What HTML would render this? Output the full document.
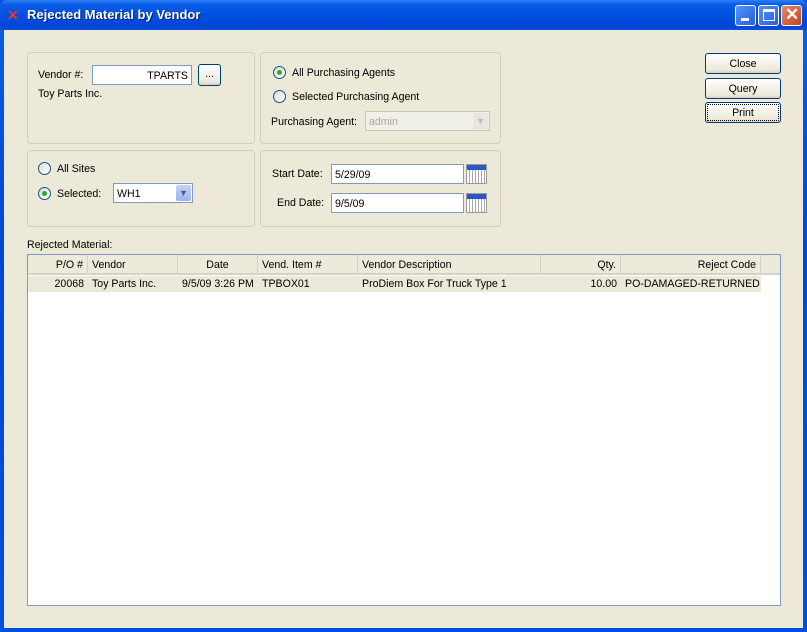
<!DOCTYPE html>
<html><head><style>
*{box-sizing:border-box;margin:0;padding:0}
body{width:807px;height:632px;overflow:hidden;font-family:"Liberation Sans",sans-serif;font-size:10.6px;color:#000;background:#0054e3}
.win{position:absolute;left:0;top:0;width:807px;height:632px;background:linear-gradient(#0a5fe8,#0046d5 40%,#0050e0);border-radius:7px 7px 0 0}
.title{position:absolute;left:0;top:0;width:807px;height:30px;background:linear-gradient(#2b7ff5 0%,#0a5ce6 15%,#0050e0 50%,#0046d8 85%,#0a4fd6 100%);border-radius:7px 7px 0 0}
.title span{position:absolute;left:27px;top:7px;color:#fff;font-weight:bold;font-size:13px;text-shadow:1px 1px #0a1e6e}
.client{position:absolute;left:4px;top:30px;width:799px;height:598px;background:#ece9d8}
.grp{position:absolute;border:1px solid #d0d0bf;border-radius:4px}
.abs{position:absolute}
.inp{position:absolute;background:#fff;border:1px solid #7f9db9;height:20px;padding:4px 3px 0;white-space:nowrap}
.btn{position:absolute;width:76px;height:21px;border:1px solid #003c74;border-radius:3px;background:linear-gradient(#fff,#ece9d8 85%,#d6d0c5);text-align:center;line-height:20px}
.radio{position:absolute;width:13px;height:13px;border-radius:50%;border:1px solid #1c5180;background:linear-gradient(135deg,#dcdcd6,#fff)}
.radio.on::after{content:"";position:absolute;left:3px;top:3px;width:5px;height:5px;border-radius:50%;background:#2fa82f}
.cal{position:absolute;width:21px;height:20px;border:1px solid #999;background:repeating-linear-gradient(90deg,#fff 0 2px,#aaa 2px 3px),#fff}
.cal::before{content:"";position:absolute;left:0;top:0;right:0;height:5px;background:#2b56c4}
.hdr{position:absolute;top:0;height:20px;line-height:21px;border-right:1px solid #d5d2c2;padding:0 4px;white-space:nowrap}
.cell{position:absolute;top:0;line-height:17px;padding:0 4px;white-space:nowrap}
.wb{position:absolute;top:5px;width:21px;height:21px;border:1px solid #fff;border-radius:3px;background:linear-gradient(135deg,#5a8ff7,#2360e0)}
</style></head><body>
<div class="win">
<div class="title">
<div class="abs" style="left:7px;top:7px;color:#e33;font-weight:bold;font-size:14px;">✕</div>
<span>Rejected Material by Vendor</span>
<div class="wb" style="left:735px"><div class="abs" style="left:5px;top:12px;width:8px;height:3px;background:#fff"></div></div>
<div class="wb" style="left:758px"><div class="abs" style="left:4px;top:3px;width:12px;height:12px;border:1px solid #fff;border-top-width:3px"></div></div>
<div class="wb" style="left:781px;background:linear-gradient(135deg,#e88a6a,#c8401c)"><div class="abs" style="left:3px;top:-1px;color:#fff;font-size:17px;font-weight:bold">✕</div></div>
</div>
<div class="client">
<div class="grp" style="left:23px;top:22px;width:228px;height:92px"></div>
<div class="grp" style="left:256px;top:22px;width:241px;height:92px"></div>
<div class="grp" style="left:23px;top:120px;width:228px;height:77px"></div>
<div class="grp" style="left:256px;top:120px;width:241px;height:77px"></div>

<div class="abs" style="left:34px;top:39px">Vendor #:</div>
<div class="inp" style="left:88px;top:35px;width:100px;text-align:right">TPARTS</div>
<div class="btn" style="left:194px;top:34px;width:23px;height:22px;line-height:18px">...</div>
<div class="abs" style="left:34px;top:58px">Toy Parts Inc.</div>

<div class="radio on" style="left:269px;top:36px"></div><div class="abs" style="left:288px;top:37px">All Purchasing Agents</div>
<div class="radio" style="left:269px;top:60px"></div><div class="abs" style="left:288px;top:61px">Selected Purchasing Agent</div>
<div class="abs" style="left:267px;top:86px">Purchasing Agent:</div>
<div class="inp" style="left:361px;top:81px;width:125px;background:#f0efe8;border-color:#c9c7ba;color:#aca899">admin<span class="abs" style="right:1px;top:1px;width:15px;height:16px;background:#e8e6df;color:#bbb;text-align:center;font-size:9px;line-height:16px">▼</span></div>

<div class="radio" style="left:34px;top:132px"></div><div class="abs" style="left:53px;top:133px">All Sites</div>
<div class="radio on" style="left:34px;top:157px"></div><div class="abs" style="left:53px;top:158px">Selected:</div>
<div class="inp" style="left:109px;top:153px;width:80px">WH1<span class="abs" style="right:1px;top:1px;width:15px;height:16px;border-radius:2px;background:linear-gradient(#c6d3f7,#9cb4ef);color:#4d6185;text-align:center;font-size:9px;line-height:16px">▼</span></div>

<div class="abs" style="left:268px;top:138px">Start Date:</div>
<div class="inp" style="left:327px;top:134px;width:133px">5/29/09</div>
<div class="cal" style="left:462px;top:134px"></div>
<div class="abs" style="left:273px;top:167px">End Date:</div>
<div class="inp" style="left:327px;top:163px;width:133px">9/5/09</div>
<div class="cal" style="left:462px;top:163px"></div>

<div class="btn" style="left:701px;top:23px">Close</div>
<div class="btn" style="left:701px;top:48px">Query</div>
<div class="btn" style="left:701px;top:72px;outline:1px dotted #000;outline-offset:-3px">Print</div>

<div class="abs" style="left:23px;top:209px">Rejected Material:</div>
<div class="abs" style="left:23px;top:224px;width:754px;height:352px;border:1px solid #7f9db9;background:#fff">
 <div class="abs" style="left:0;top:0;width:752px;height:20px;background:#ebeadb;border-bottom:2px solid #d6d3c4">
  <div class="hdr" style="left:0;width:60px;text-align:right">P/O #</div>
  <div class="hdr" style="left:60px;width:90px">Vendor</div>
  <div class="hdr" style="left:150px;width:80px;text-align:center">Date</div>
  <div class="hdr" style="left:230px;width:100px">Vend. Item #</div>
  <div class="hdr" style="left:330px;width:183px">Vendor Description</div>
  <div class="hdr" style="left:513px;width:80px;text-align:right">Qty.</div>
  <div class="hdr" style="left:593px;width:140px;text-align:right">Reject Code</div>
 </div>
 <div class="abs" style="left:0;top:21px;width:733px;height:16px;background:#ebe9da">
  <div class="cell" style="left:0;width:60px;text-align:right">20068</div>
  <div class="cell" style="left:60px">Toy Parts Inc.</div>
  <div class="cell" style="left:150px">9/5/09 3:26 PM</div>
  <div class="cell" style="left:230px">TPBOX01</div>
  <div class="cell" style="left:330px">ProDiem Box For Truck Type 1</div>
  <div class="cell" style="left:513px;width:80px;text-align:right">10.00</div>
  <div class="cell" style="left:593px;width:140px;text-align:right">PO-DAMAGED-RETURNED</div>
 </div>
</div>
</div>
</div>
</body></html>
